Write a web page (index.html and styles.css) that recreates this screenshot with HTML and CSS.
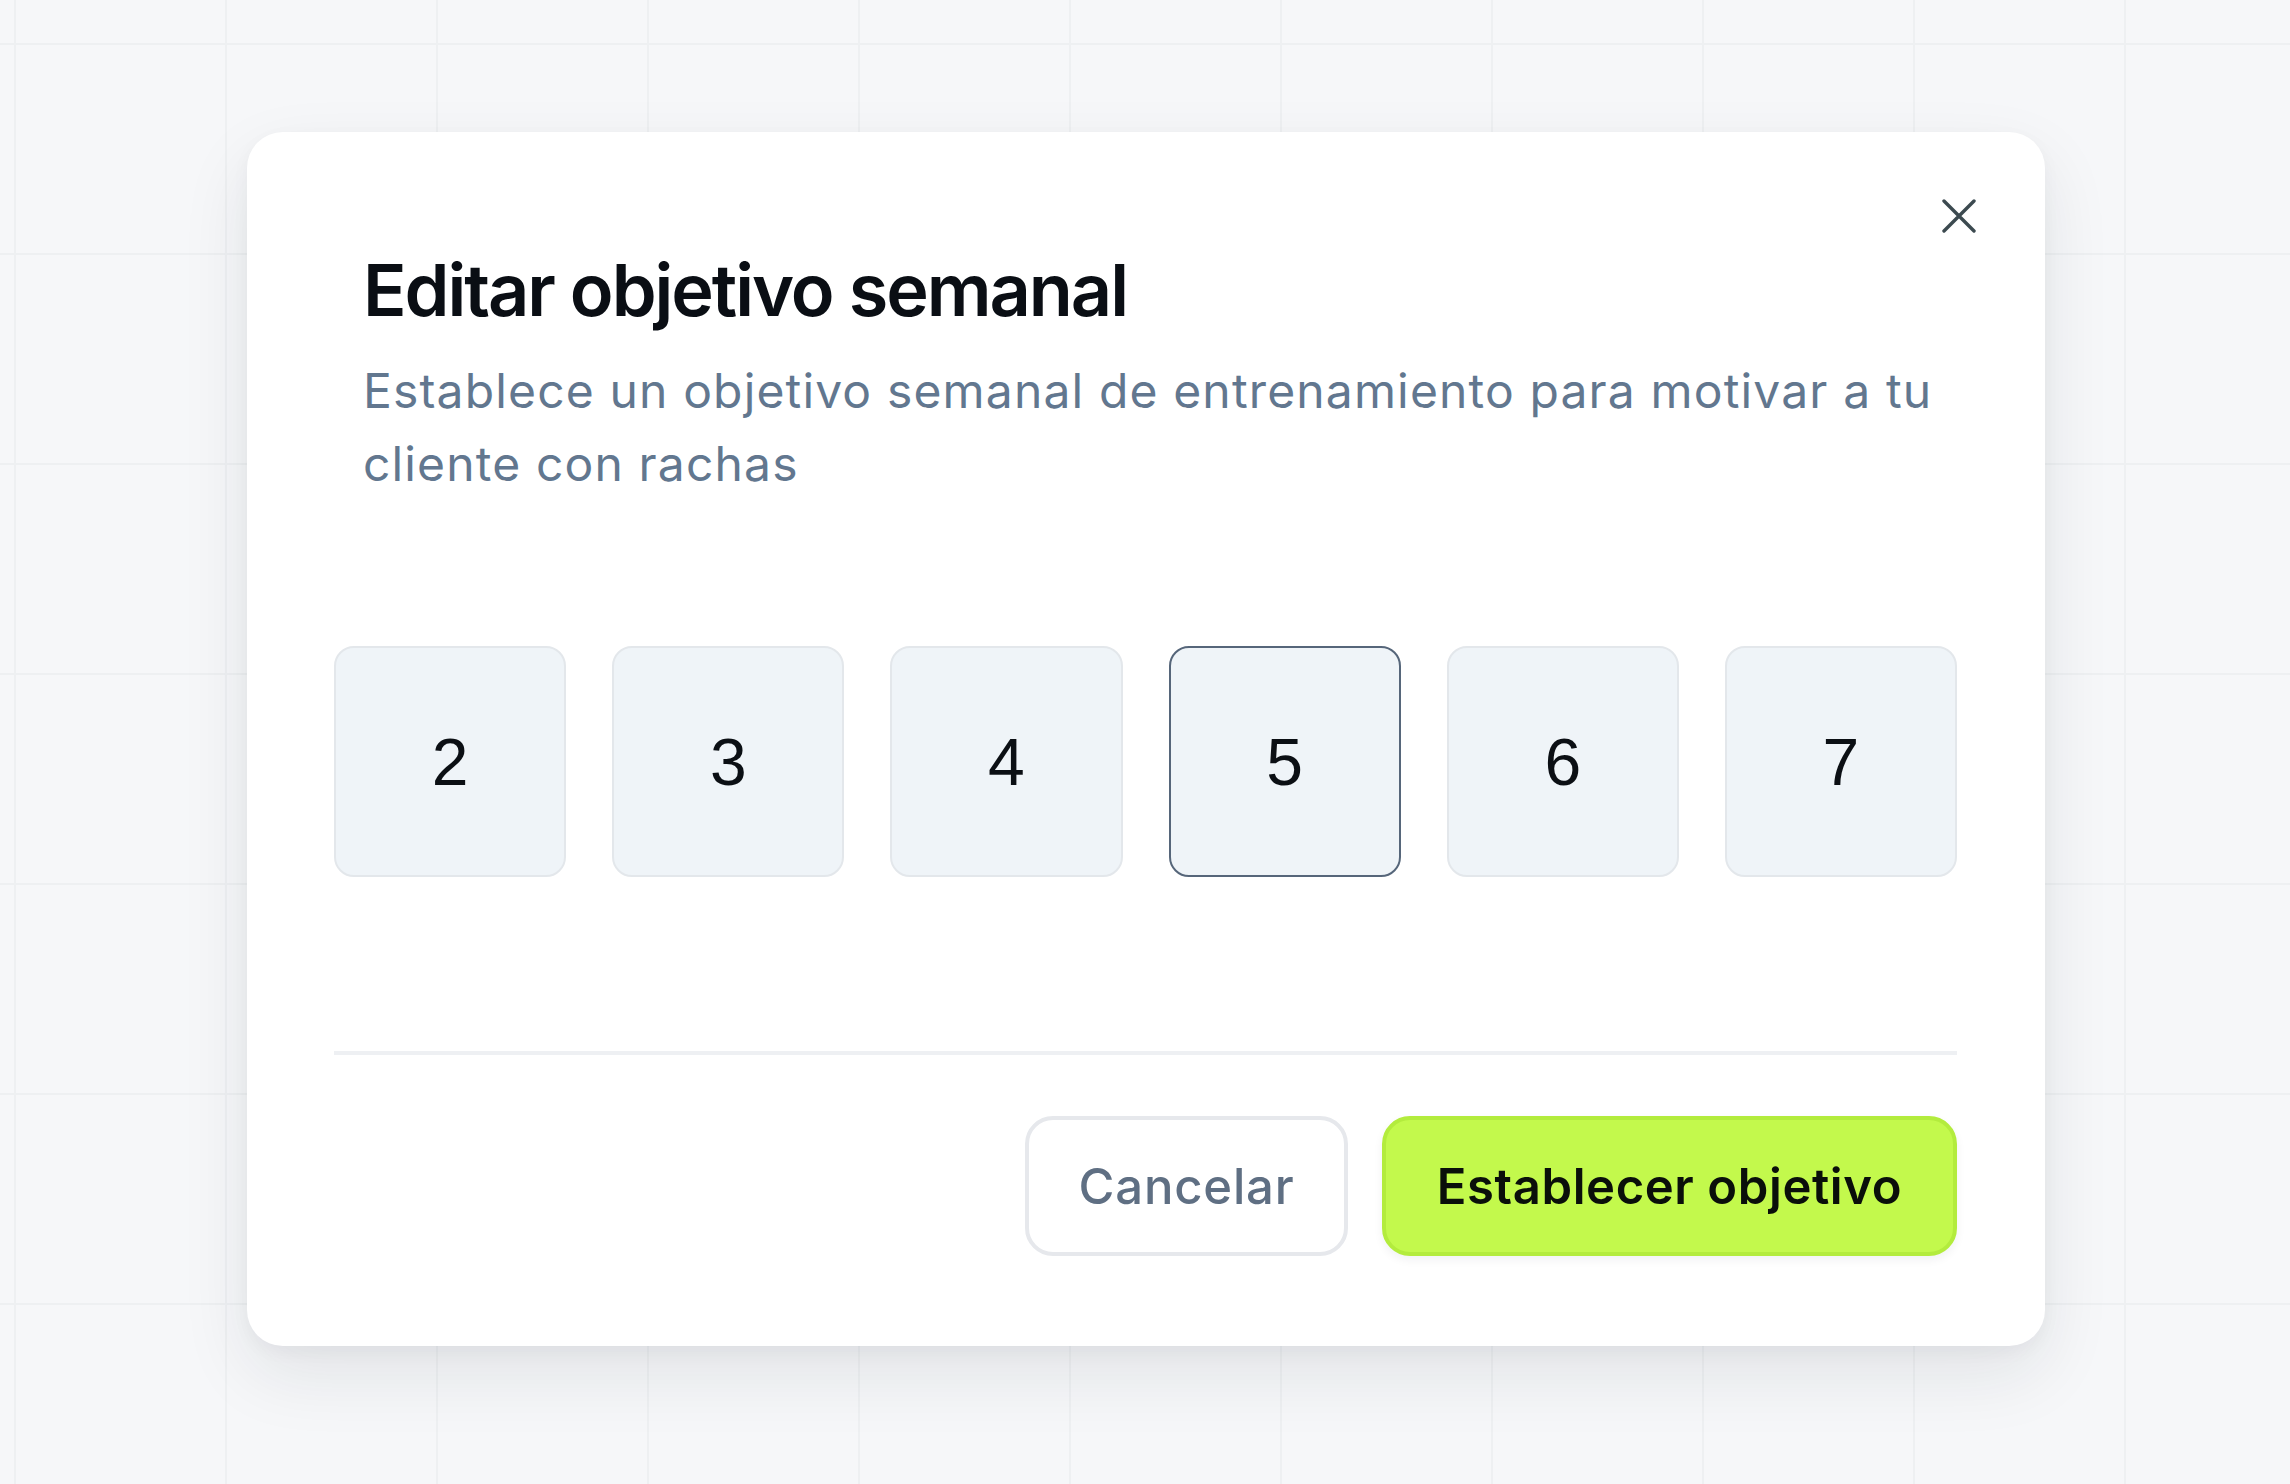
FILE: index.html
```html
<!DOCTYPE html>
<html lang="es">
<head>
<meta charset="utf-8">
<title>Editar objetivo semanal</title>
<link rel="stylesheet" href="styles.css">
</head>
<body>
<div class="canvas">
  <div class="modal" role="dialog" aria-labelledby="goal-title">
    <button class="close" aria-label="Cerrar">
      <svg viewBox="0 0 34 34" width="34" height="34" aria-hidden="true">
        <path d="M2 2 L32 32 M32 2 L2 32" fill="none" stroke="#3c4a50" stroke-width="3.4" stroke-linecap="round"/>
      </svg>
    </button>
    <div class="header">
      <h1 id="goal-title" class="title">Editar objetivo semanal</h1>
      <p class="subtitle">Establece un objetivo semanal de entrenamiento para motivar a tu cliente con rachas</p>
    </div>
    <div class="options">
      <button class="option">2</button>
      <button class="option">3</button>
      <button class="option">4</button>
      <button class="option selected">5</button>
      <button class="option">6</button>
      <button class="option">7</button>
    </div>
    <div class="divider"></div>
    <div class="footer">
      <button class="btn btn-cancel">Cancelar</button>
      <button class="btn btn-primary">Establecer objetivo</button>
    </div>
  </div>
</div>
</body>
</html>
```

FILE: styles.css
```css
* { box-sizing: border-box; }

html, body {
  margin: 0;
  padding: 0;
}

body {
  width: 2290px;
  height: 1484px;
  overflow: hidden;
  background-color: #f6f7f9;
  background-image:
    linear-gradient(to right, #eef0f2 0, #eef0f2 2px, transparent 2px),
    linear-gradient(to bottom, #eef0f2 0, #eef0f2 2px, transparent 2px);
  background-size: 211px 210px;
  background-position: 14px 43px;
  font-family: Inter, "Noto Sans", sans-serif;
}

.canvas {
  padding-top: 132px;
  padding-left: 247px;
}

.modal {
  position: relative;
  width: 1798px;
  height: 1214px;
  background: #ffffff;
  border-radius: 36px;
  box-shadow: 0 28px 70px rgba(20, 28, 45, 0.09), 0 6px 18px rgba(20, 28, 45, 0.04);
  padding: 115px 88px 90px 87px;
  display: flex;
  flex-direction: column;
}

.close {
  position: absolute;
  top: 67px;
  right: 69px;
  width: 34px;
  height: 34px;
  padding: 0;
  border: 0;
  background: none;
  display: flex;
}

.header {
  padding-left: 29px;
}

.title {
  margin: 0;
  font-size: 72px;
  line-height: 86px;
  font-weight: 600;
  letter-spacing: -2.05px;
  color: #0a0e14;
}

.subtitle {
  margin: 21px 0 0 0;
  font-size: 48px;
  line-height: 73px;
  font-weight: 400;
  color: #62778f;
  letter-spacing: 1.15px;
}

.options {
  margin-top: 146px;
  display: grid;
  grid-template-columns: repeat(6, 1fr);
  column-gap: 46px;
}

.option {
  height: 231px;
  border: 2px solid #e3e7eb;
  border-radius: 20px;
  background: #eff4f8;
  font-family: "Liberation Sans", Arial, sans-serif;
  font-size: 66px;
  font-weight: 400;
  color: #0b0f14;
  padding: 0;
  display: flex;
  align-items: center;
  justify-content: center;
}

.option.selected {
  border-color: #56667a;
}

.divider {
  margin-top: 174px;
  height: 4px;
  background: #eef0f3;
}

.footer {
  margin-top: 61px;
  display: flex;
  justify-content: flex-end;
  gap: 34px;
}

.btn {
  height: 140px;
  border-radius: 28px;
  font-family: Inter, "Noto Sans", sans-serif;
  font-size: 49px;
  font-weight: 600;
  padding: 0;
  display: flex;
  align-items: center;
  justify-content: center;
}

.btn-cancel {
  width: 323px;
  background: #ffffff;
  border: 4px solid #e6e8ec;
  color: #5f6f83;
  font-weight: 500;
  letter-spacing: 0.8px;
}

.btn-primary {
  width: 575px;
  background: #c3f94c;
  border: 4px solid #b3ec3d;
  color: #0a0f0a;
  letter-spacing: 0.6px;
  box-shadow: 0 4px 10px rgba(20, 28, 45, 0.06);
}
```
